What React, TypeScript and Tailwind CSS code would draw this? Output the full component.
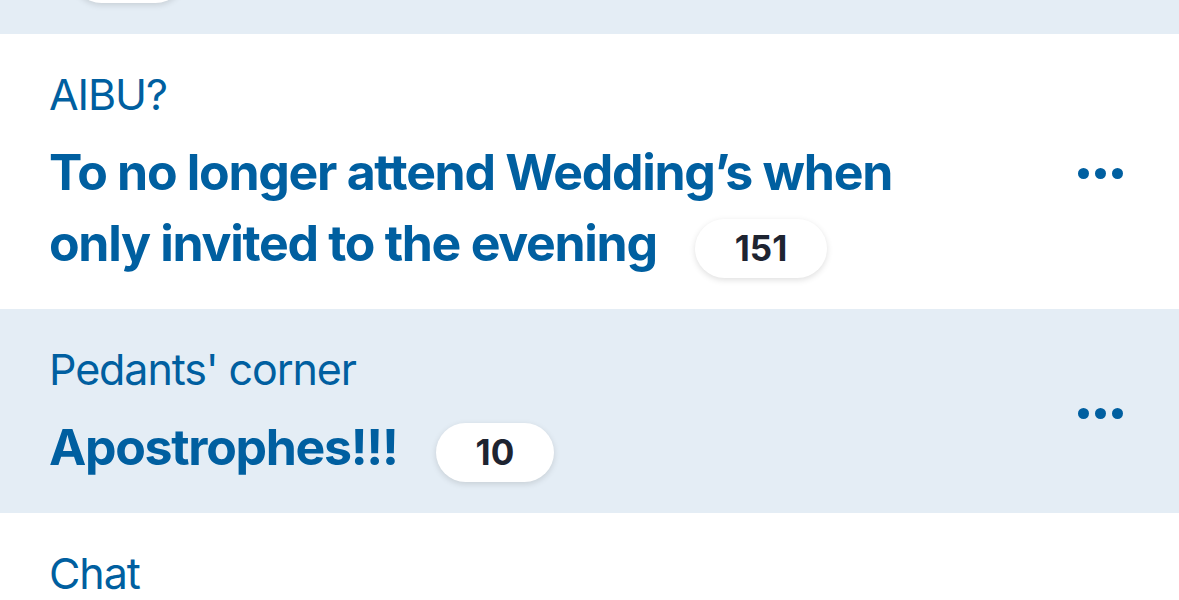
import React from "react";

type Thread = {
  topic: string;
  title: string;
  count: number;
  shaded?: boolean;
};

const threads: Thread[] = [
  { topic: "AIBU?", title: "To no longer attend Wedding\u2019s when only invited to the evening", count: 151 },
  { topic: "Pedants' corner", title: "Apostrophes!!!", count: 10, shaded: true },
];

function CountPill({ count }: { count: number }) {
  return (
    <span className="ml-[38px] inline-block h-[59px] rounded-full bg-white px-[40px] align-baseline text-[35px] font-bold leading-[59px] tracking-normal text-[#1e2431] shadow-[0_2px_6px_rgba(0,0,0,0.13)]">
      {count}
    </span>
  );
}

function MoreDots() {
  return (
    <div className="flex shrink-0 items-center gap-[6px]">
      <span className="h-[11px] w-[11px] rounded-full bg-[#005fa0]" />
      <span className="h-[11px] w-[11px] rounded-full bg-[#005fa0]" />
      <span className="h-[11px] w-[11px] rounded-full bg-[#005fa0]" />
    </div>
  );
}

function ThreadRow({ thread }: { thread: Thread }) {
  return (
    <div
      className={`flex items-center justify-between pl-[49px] pr-[56px] pt-[34px] pb-[30px] ${
        thread.shaded ? "bg-[#e4edf5]" : "bg-white"
      }`}
    >
      <div className="max-w-[900px]">
        <p className="text-[43px] leading-[52px] tracking-[-1.1px] text-[#005fa0]">{thread.topic}</p>
        <p className="mt-[17px] text-[50px] font-bold leading-[71px] tracking-[-1.3px] text-[#005fa0]">
          {thread.title}
          <CountPill count={thread.count} />
        </p>
      </div>
      <MoreDots />
    </div>
  );
}

export default function App() {
  return (
    <div className="h-[600px] w-[1179px] overflow-hidden bg-white font-['Inter',sans-serif]">
      <div className="h-[34px] overflow-hidden bg-[#e4edf5]">
        <div className="ml-[72px] -mt-[56px] h-[59px] w-[113px] rounded-full bg-white shadow-[0_2px_6px_rgba(0,0,0,0.13)]" />
      </div>
      {threads.map((t) => (
        <ThreadRow key={t.topic} thread={t} />
      ))}
      <div className="pl-[49px] pt-[34px]">
        <p className="text-[43px] leading-[52px] tracking-[-1.1px] text-[#005fa0]">Chat</p>
      </div>
    </div>
  );
}
